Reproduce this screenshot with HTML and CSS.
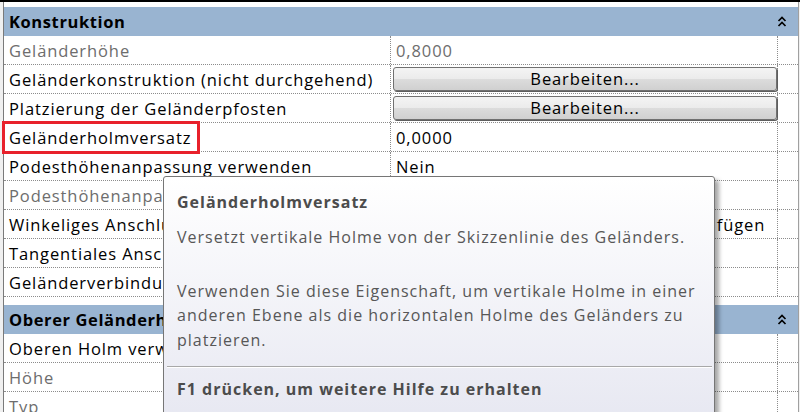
FILE: index.html
```html
<!DOCTYPE html>
<html>
<head>
    <title>Eigenschaften</title>
    <link rel="stylesheet" href="styles.css">
</head>
<body>
<div class="panel">
    <div class="grid">
        <div class="cat">
            <span>Konstruktion</span>
            <svg class="chev" width="10" height="13" viewBox="0 0 10 13"><path d="M1.5 6 L5 2.5 L8.5 6 M1.5 11 L5 7.5 L8.5 11" fill="none" stroke="#000" stroke-width="1.7"/></svg>
        </div>
        <div class="row">
            <div class="name dim">Geländerhöhe</div>
            <div class="val dim">0,8000</div>
            <div class="extra"></div>
        </div>
        <div class="row">
            <div class="name">Geländerkonstruktion (nicht durchgehend)</div>
            <div class="val"><button class="btn">Bearbeiten...</button></div>
            <div class="extra"></div>
        </div>
        <div class="row">
            <div class="name">Platzierung der Geländerpfosten</div>
            <div class="val"><button class="btn">Bearbeiten...</button></div>
            <div class="extra"></div>
        </div>
        <div class="row">
            <div class="name"><span class="mark">Geländerholmversatz</span></div>
            <div class="val">0,0000</div>
            <div class="extra"></div>
        </div>
        <div class="row">
            <div class="name">Podesthöhenanpassung verwenden</div>
            <div class="val">Nein</div>
            <div class="extra"></div>
        </div>
        <div class="row">
            <div class="name dim">Podesthöhenanpassung</div>
            <div class="val dim">0,0000</div>
            <div class="extra"></div>
        </div>
        <div class="row">
            <div class="name">Winkeliges Anschlussstück</div>
            <div class="val">Vertikale/horizontale Segmente hinzufügen</div>
            <div class="extra"></div>
        </div>
        <div class="row">
            <div class="name">Tangentiales Anschlussstück</div>
            <div class="val">Holme verlängern</div>
            <div class="extra"></div>
        </div>
        <div class="row">
            <div class="name">Geländerverbindungen</div>
            <div class="val">Trimmen</div>
            <div class="extra"></div>
        </div>

        <div class="cat second">
            <span>Oberer Geländerholm</span>
            <svg class="chev" width="10" height="13" viewBox="0 0 10 13"><path d="M1.5 6 L5 2.5 L8.5 6 M1.5 11 L5 7.5 L8.5 11" fill="none" stroke="#000" stroke-width="1.7"/></svg>
        </div>
        <div class="row">
            <div class="name">Oberen Holm verwenden</div>
            <div class="val">Ja</div>
            <div class="extra"></div>
        </div>
        <div class="row">
            <div class="name dim">Höhe</div>
            <div class="val dim">1,0000</div>
            <div class="extra"></div>
        </div>
        <div class="row">
            <div class="name dim">Typ</div>
            <div class="val dim">Rund</div>
            <div class="extra"></div>
        </div>
    </div>

    <!-- tooltip over the grid -->
    <div class="tip">
        <div class="tip-title">Geländerholmversatz</div>
        <p class="tip-text">Versetzt vertikale Holme von der Skizzenlinie des Geländers.</p>
        <p class="tip-text more">Verwenden Sie diese Eigenschaft, um vertikale Holme in einer anderen Ebene als die horizontalen Holme des Geländers zu platzieren.</p>
        <div class="tip-sep"></div>
        <div class="tip-foot">F1 drücken, um weitere Hilfe zu erhalten</div>
    </div>
</div>
</body>
</html>
```

FILE: styles.css
```css
body {
    margin: 0;
    padding: 0;
    background-color: #f0f0f0;
    font-family: "Open Sans", Arial, sans-serif;
    font-size: 16.5px;
    letter-spacing: 0.9px;
    color: #000;
    overflow: hidden;
}

.panel {
    position: relative;
    height: 412px;
    border-top: 2px solid #000;
}

.grid {
    margin-left: 3px;
    width: 794px;
    padding-top: 5px;
    background-color: #fff;
    border-left: 1px solid #7a7a7a;
    border-right: 1px solid #a0a0a0;
    height: 405px;
}

.cat {
    height: 29px;
    background-color: #99b4d1;
    display: flex;
    align-items: center;
    justify-content: space-between;
    padding: 0 11px 0 5px;
    font-weight: bold;
    letter-spacing: 0.6px;
}

.cat.second {
    margin-top: 8px;
}

.row {
    display: flex;
    height: 28px;
    border-bottom: 1px dotted #8c8c8c;
}

.name {
    width: 381px;
    padding-left: 5px;
    border-right: 1px dotted #8c8c8c;
    display: flex;
    align-items: center;
    white-space: nowrap;
}

.val {
    width: 381px;
    padding-left: 5px;
    border-right: 1px dotted #8c8c8c;
    display: flex;
    align-items: center;
    white-space: nowrap;
}

.extra {
    flex: 1;
}

.dim {
    color: #6d6d6d;
}

.mark {
    align-self: stretch;
    display: flex;
    align-items: center;
    margin: 1px 0 0 -4px;
    padding: 0 6px 0 4px;
    outline: 3px solid #e8212b;
}

.btn {
    margin-left: -3px;
    width: 384px;
    height: 24px;
    font-family: "Open Sans", Arial, sans-serif;
    font-size: 16.5px;
    letter-spacing: 0.9px;
    color: #000;
    border: 1px solid #707070;
    border-radius: 3px;
    background: linear-gradient(#f4f4f4, #ebebeb 50%, #dcdcdc 51%, #d0d0d0);
    box-shadow: 1px 1px 0 #5e5e5e;
    padding: 0;
    line-height: 20px;
}

.tip {
    position: absolute;
    left: 163px;
    top: 174px;
    width: 525px;
    height: 260px;
    padding: 13px 12px 0 13px;
    border: 1px solid #767676;
    border-radius: 3px;
    background: linear-gradient(#ffffff, #e4e5f0);
    box-shadow: 4px 4px 4px rgba(0, 0, 0, 0.35);
    color: #575757;
    font-size: 16px;
    letter-spacing: 1px;
}

.tip-title {
    font-weight: bold;
    color: #4c4c4c;
    line-height: 24px;
}

.tip-text {
    margin: 11px 0 0 0;
    line-height: 24.5px;
}

.tip-text.more {
    margin-top: 29px;
}

.tip-sep {
    margin: 14px -10px 0 -10px;
    height: 1px;
    background-color: #a8a8a8;
    border-bottom: 1px solid #fff;
}

.tip-foot {
    margin-top: 9px;
    font-weight: bold;
    color: #4c4c4c;
    line-height: 24px;
}
```
